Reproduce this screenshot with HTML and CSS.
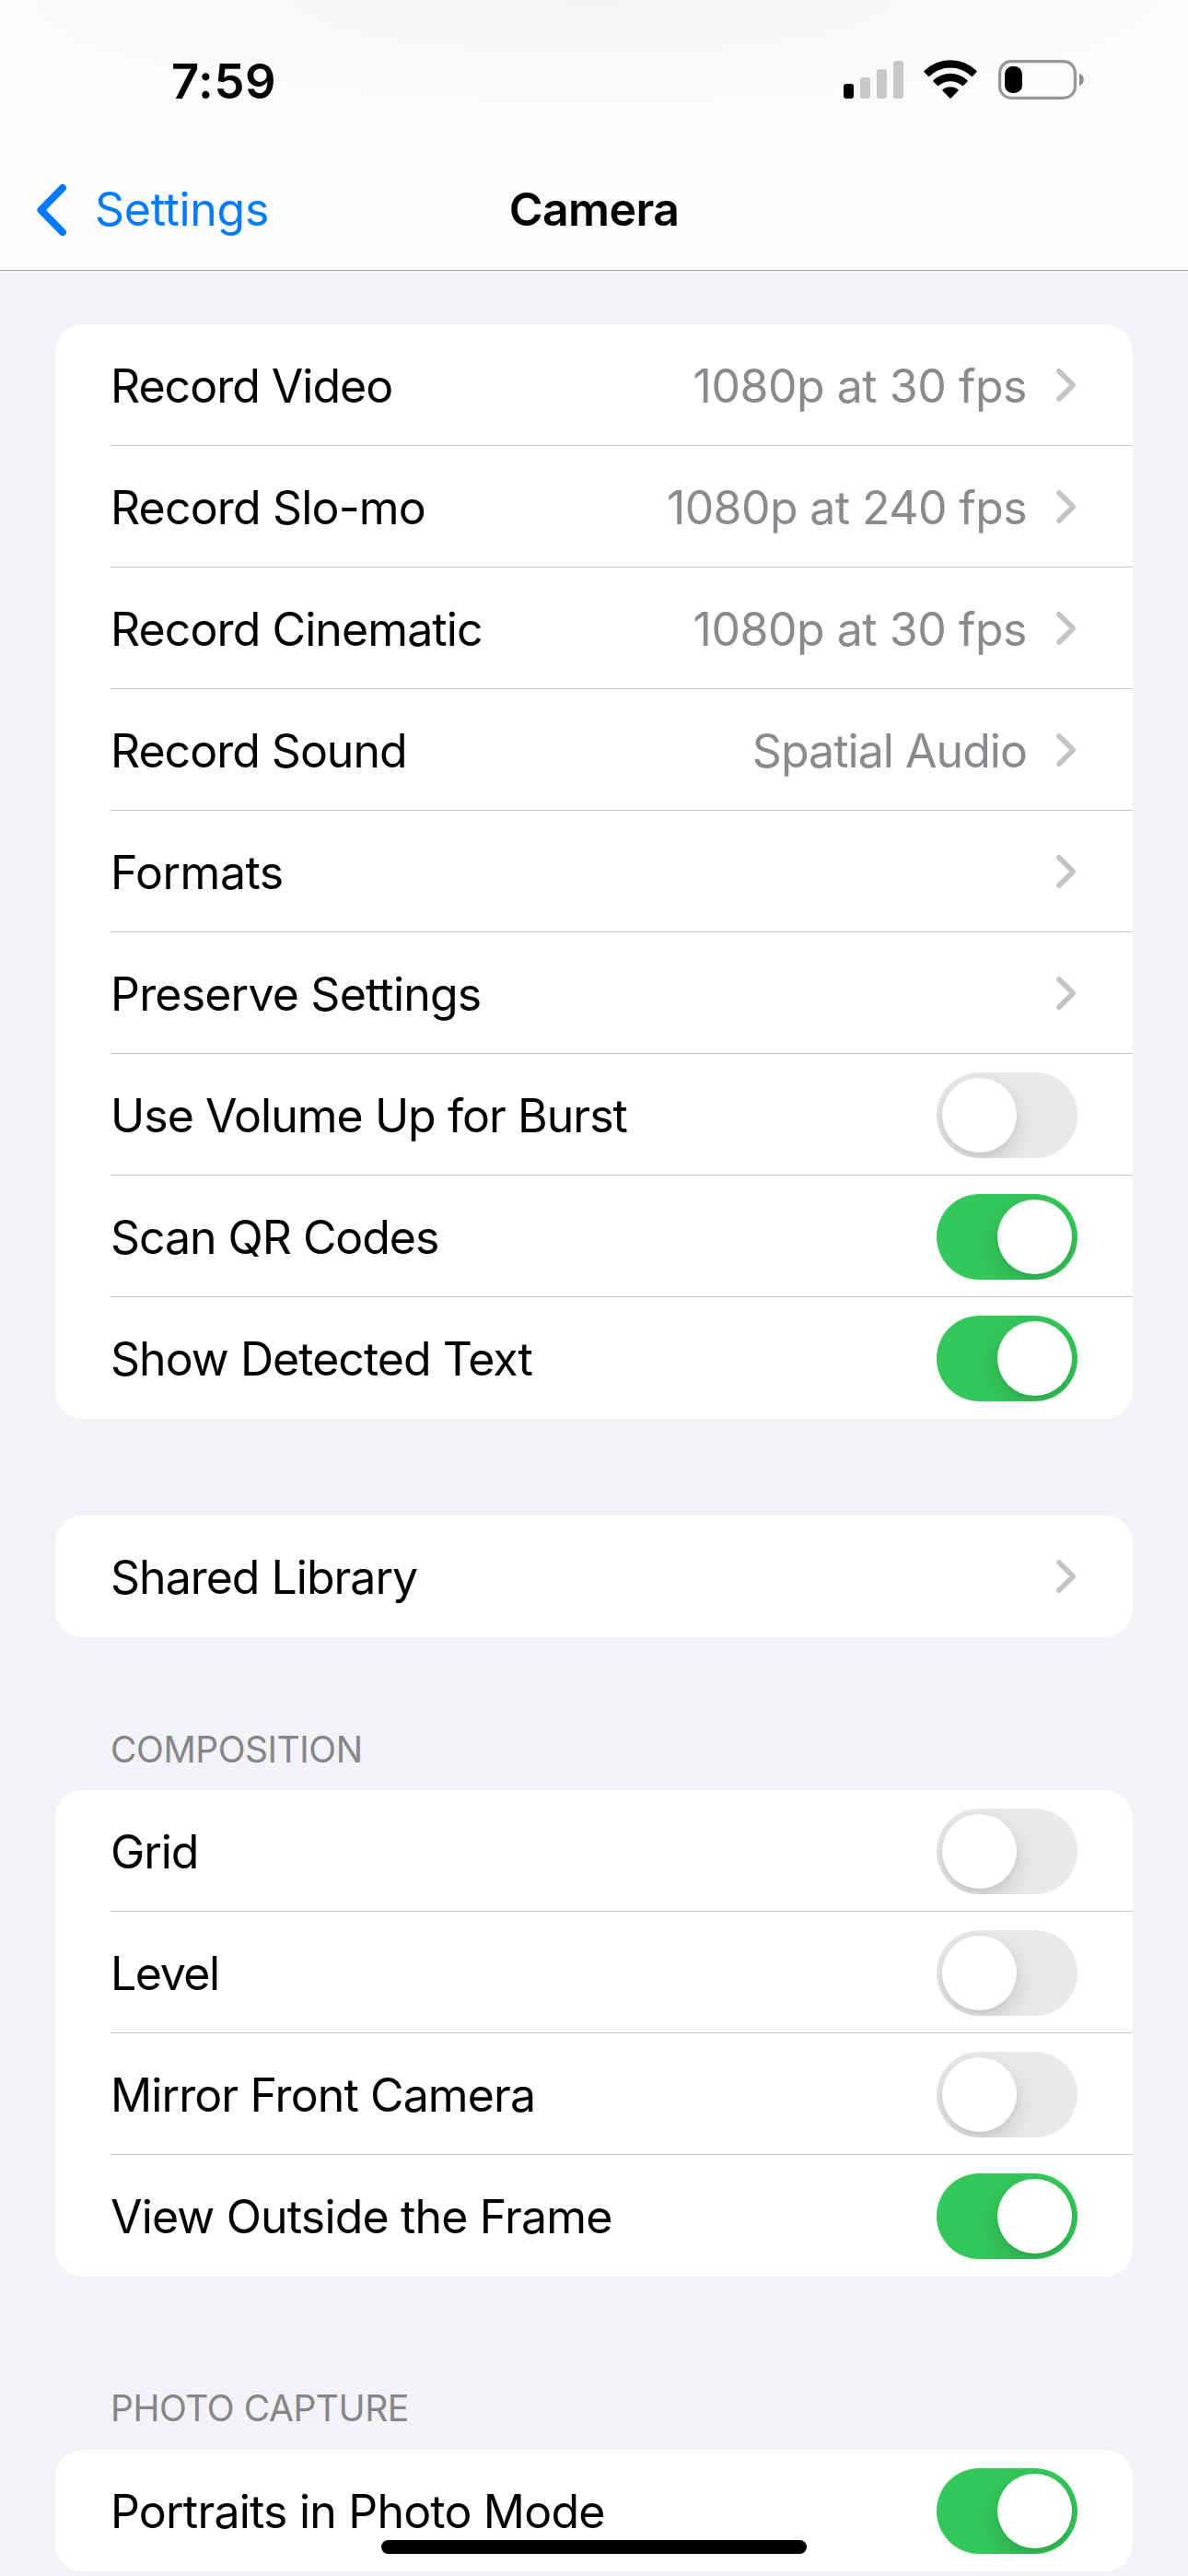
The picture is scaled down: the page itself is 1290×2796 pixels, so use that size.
FILE: index.html
```html
<!DOCTYPE html>
<html lang="en">
<head>
<meta charset="utf-8">
<title>Camera</title>
<link rel="stylesheet" href="styles.css">
</head>
<body>
<svg class="defs" aria-hidden="true">
  <symbol id="chevron" viewBox="0 0 22 36"><path d="M3 3 18.3 18 3 33"/></symbol>
</svg>
<header class="top">
  <div class="status">
    <time class="clock">7:59</time>
    <div class="indicators">
      <svg class="signal" viewBox="0 0 65 41"><rect class="lit" x="0" y="25" width="11" height="16" rx="3"/><rect x="18" y="18" width="11" height="23" rx="3"/><rect x="36" y="9" width="11" height="32" rx="3"/><rect x="54" y="0" width="11" height="41" rx="3"/></svg>
      <svg class="wifi" viewBox="0 0 58 42"><path d="M.6 11.8A40.5 40.5 0 0 1 57.4 11.8Q58 12.5 57.4 13.2L53.2 17.7Q52.5 18.4 51.8 17.7A33 33 0 0 0 6.200 17.700Q5.500 18.400 4.800 17.700L.6 13.200Q0 12.500 .6 11.800Z"/><path d="M10.500 22.200A27 27 0 0 1 47.500 22.200Q48 22.800 47.500 23.400L43 28Q42.400 28.600 41.700 28A19 19 0 0 0 16.300 28Q15.600 28.600 15 28L10.500 23.400Q10 22.800 10.500 22.200Z"/><path d="M20.500 32.300A13 13 0 0 1 37.500 32.300Q38.100 33 37.500 33.600L29.600 41.600Q29 42.200 28.400 41.600L20.500 33.600Q19.900 33 20.500 32.300Z"/></svg>
      <svg class="battery" viewBox="0 0 93 43"><rect class="shell" x="1.600" y="1.600" width="81.800" height="39.800" rx="12.500"/><rect x="7" y="7" width="19" height="29" rx="8.500"/><path class="nub" d="M88 14.800C94.500 17.500 94.500 25.500 88 28.200Z"/></svg>
    </div>
  </div>
  <nav class="nav">
    <a class="back"><svg class="back-icon" viewBox="0 0 34 58"><path d="M29 5 5.500 29 29 53"/></svg><span class="back-text">Settings</span></a>
    <h1 class="title">Camera</h1>
  </nav>
</header>
<main class="content">
  <section class="card">
    <div class="row"><span class="label l-video">Record Video</span><span class="value v-30">1080p at 30 fps</span><svg class="chevron"><use href="#chevron"/></svg></div>
    <div class="row"><span class="label l-slomo">Record Slo-mo</span><span class="value">1080p at 240 fps</span><svg class="chevron"><use href="#chevron"/></svg></div>
    <div class="row"><span class="label">Record Cinematic</span><span class="value v-30">1080p at 30 fps</span><svg class="chevron"><use href="#chevron"/></svg></div>
    <div class="row"><span class="label l-sound">Record Sound</span><span class="value v-audio">Spatial Audio</span><svg class="chevron"><use href="#chevron"/></svg></div>
    <div class="row"><span class="label l-formats">Formats</span><svg class="chevron"><use href="#chevron"/></svg></div>
    <div class="row"><span class="label l-preserve">Preserve Settings</span><svg class="chevron"><use href="#chevron"/></svg></div>
    <div class="row"><span class="label l-burst">Use Volume Up for Burst</span><span class="toggle"></span></div>
    <div class="row"><span class="label l-qr">Scan QR Codes</span><span class="toggle on"></span></div>
    <div class="row"><span class="label l-text">Show Detected Text</span><span class="toggle on"></span></div>
  </section>
  <section class="card library">
    <div class="row"><span class="label l-library">Shared Library</span><svg class="chevron"><use href="#chevron"/></svg></div>
  </section>
  <h2 class="heading composition">COMPOSITION</h2>
  <section class="card">
    <div class="row"><span class="label l-grid">Grid</span><span class="toggle"></span></div>
    <div class="row"><span class="label l-level">Level</span><span class="toggle"></span></div>
    <div class="row"><span class="label">Mirror Front Camera</span><span class="toggle"></span></div>
    <div class="row"><span class="label l-frame">View Outside the Frame</span><span class="toggle on"></span></div>
  </section>
  <h2 class="heading capture">PHOTO CAPTURE</h2>
  <section class="card">
    <div class="row"><span class="label l-portraits">Portraits in Photo Mode</span><span class="toggle on"></span></div>
  </section>
</main>
<div class="home-indicator"></div>
</body>
</html>
```
FILE: styles.css
```css
* { box-sizing: border-box; }
body {
  margin: 0;
  width: 1290px;
  height: 2796px;
  overflow: hidden;
  position: relative;
  background: #f2f2f7;
  color: #000;
  font: 400 50px/60px Inter, "Liberation Sans", sans-serif;
  letter-spacing: -0.6px;
}
.defs { display: none; }
svg { flex: none; }

.top {
  height: 294px;
  border-bottom: 1px solid #a9a9ad;
  background: radial-gradient(ellipse 720px 130px at 50% 0, #f5f5f5, rgba(245, 245, 245, 0)), #fbfbfc;
}
.status {
  height: 162px;
  padding: 57px 113px 0 186px;
  display: flex;
  justify-content: space-between;
}
.clock { font-size: 52.5px; font-weight: 600; line-height: 62px; letter-spacing: 0.6px; }
.indicators { display: flex; padding-top: 8px; }
.signal { width: 65px; height: 41px; margin-top: 1px; fill: #c8c8c8; }
.signal .lit { fill: #000; }
.wifi { width: 58px; height: 42px; margin-left: 22px; }
.battery { width: 93px; height: 43px; margin-left: 23px; }
.shell { fill: none; stroke: #979797; stroke-width: 3.200; }
.nub { fill: #8c8c8c; }

.nav {
  height: 131px;
  display: grid;
  grid-template-columns: 1fr auto 1fr;
  align-items: center;
}
.back { display: flex; align-items: center; gap: 30px; padding-left: 39px; color: #007aff; }
.back-icon { width: 34px; height: 58px; }
.back-icon path { fill: none; stroke: #007aff; stroke-width: 8; stroke-linecap: round; stroke-linejoin: round; }
.back-text { padding-bottom: 2px; letter-spacing: -0.3px; }
.title { margin: 0; padding-bottom: 2px; font-size: 50px; font-weight: 600; }

.content { padding: 58px 60px 0; }
.card { background: #fff; border-radius: 30px; overflow: hidden; }
.library { margin-top: 105px; }
.row {
  height: 132px;
  margin-left: 60px;
  padding: 2px 60px 0 0;
  display: flex;
  align-items: center;
  border-bottom: 1px solid #c6c6c8;
}
.row:last-child { border-bottom-color: transparent; }
.label { flex: 1; white-space: nowrap; letter-spacing: -0.9px; }
.l-slomo, .l-frame { letter-spacing: -0.83px; }
.l-video, .l-sound, .l-library { letter-spacing: -1px; }
.l-burst, .l-text { letter-spacing: -0.96px; }
.l-qr { letter-spacing: -1.05px; }
.l-grid { letter-spacing: -1.1px; }
.l-level { letter-spacing: -1.4px; }
.l-formats { letter-spacing: -0.5px; }
.l-preserve, .l-portraits { letter-spacing: -0.8px; }
.value { color: #8a8a8e; white-space: nowrap; }
.v-30 { letter-spacing: -0.47px; }
.v-audio { letter-spacing: -0.97px; }
.chevron { width: 22px; height: 36px; margin: 0 1px 1px 32px; }
#chevron path, .chevron { fill: none; stroke: #c4c4c6; stroke-width: 5.800; stroke-linecap: round; stroke-linejoin: round; }

.toggle {
  width: 153px;
  height: 93px;
  padding: 6px;
  border-radius: 47px;
  overflow: hidden;
  display: flex;
  background: #e9e9ea;
}
.toggle::before {
  content: "";
  width: 81px;
  height: 81px;
  border-radius: 50%;
  background: #fff;
  box-shadow: 0 9px 24px rgba(0, 0, 0, .15), 0 3px 4px rgba(0, 0, 0, .04);
}
.toggle.on { background: #34c759; justify-content: flex-end; }

.heading {
  margin: 0;
  padding-left: 60px;
  color: #85858a;
  font-size: 39px;
  font-weight: 400;
  line-height: 48px;
  letter-spacing: -0.45px;
}
.composition { padding-top: 98px; height: 166px; }
.capture { padding-top: 119px; height: 188px; }

.home-indicator {
  position: absolute;
  left: 414px;
  top: 2757px;
  width: 462px;
  height: 15px;
  border-radius: 8px;
  background: #000;
}
```
